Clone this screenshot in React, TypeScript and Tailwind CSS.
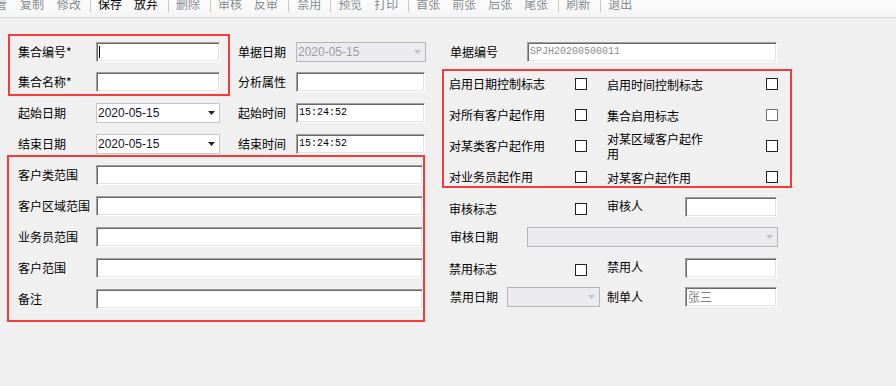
import React from 'react';

// Classic sunken Windows edit box
const sunken =
  'border border-t-[#a0a0a0] border-l-[#a0a0a0] border-b-white border-r-white bg-white shadow-[inset_1px_1px_0_#696969,inset_-1px_-1px_0_#e3e3e3]';

const tools: { t?: string; ml: string; dark?: boolean }[] = [
  { t: '管', ml: '-ml-[5px]' },
  { t: '复制', ml: 'ml-[13px]' },
  { t: '修改', ml: 'ml-[13px]' },
  { ml: 'ml-[9px]' },
  { t: '保存', ml: 'ml-[7px]', dark: true },
  { t: '放弃', ml: 'ml-[12px]', dark: true },
  { ml: 'ml-[10px]' },
  { t: '删除', ml: 'ml-[7px]' },
  { ml: 'ml-[10px]' },
  { t: '审核', ml: 'ml-[7px]' },
  { t: '反审', ml: 'ml-[12px]' },
  { ml: 'ml-[10px]' },
  { t: '禁用', ml: 'ml-[8px]' },
  { ml: 'ml-[9px]' },
  { t: '预览', ml: 'ml-[7px]' },
  { t: '打印', ml: 'ml-[12px]' },
  { ml: 'ml-[10px]' },
  { t: '首张', ml: 'ml-[7px]' },
  { t: '前张', ml: 'ml-[12px]' },
  { t: '后张', ml: 'ml-[12px]' },
  { t: '尾张', ml: 'ml-[12px]' },
  { ml: 'ml-[10px]' },
  { t: '刷新', ml: 'ml-[7px]' },
  { ml: 'ml-[10px]' },
  { t: '退出', ml: 'ml-[7px]' },
];

function TextBox({ className = '', children }: { className?: string; children?: React.ReactNode }) {
  return (
    <div className={`flex h-[20px] shrink-0 items-center pl-[2px] ${sunken} ${className}`}>{children}</div>
  );
}

function Combo({ className = '', value = '', disabled = false }: { className?: string; value?: string; disabled?: boolean }) {
  return (
    <div
      className={`flex h-[20px] shrink-0 items-center justify-between border pl-[1px] pr-[4px] ${
        disabled ? 'border-[#b4b4bc] bg-[#ebebee] text-[#9c9ca6]' : 'border-[#c6c6c6] bg-white text-[#14142a]'
      } ${className}`}
    >
      <span className="font-['Liberation_Sans',sans-serif] text-[12px]">{value}</span>
      <svg width="7" height="4" viewBox="0 0 7 4">
        <path d="M0 0H7L3.5 4Z" fill={disabled ? '#c2c2c8' : '#222'} />
      </svg>
    </div>
  );
}

function Check({ gray = false }: { gray?: boolean }) {
  return <span className={`h-3 w-3 shrink-0 border bg-white ${gray ? 'border-[#707070]' : 'border-[#222]'}`} />;
}

const mono = "font-['Liberation_Mono',monospace] text-[10px]";

export default function App() {
  return (
    <div className="h-[386px] w-[896px] overflow-hidden bg-[#f0f0f0] font-['Noto_Sans_CJK_SC',sans-serif] text-[12px] leading-[14px] text-black">
      {/* toolbar */}
      <div className="flex h-[18px] items-start overflow-hidden whitespace-nowrap border-b border-[#dadada] bg-linear-to-b from-[#fcfcfc] to-[#f4f4f4]">
        {tools.map((it, i) =>
          it.t ? (
            <span key={i} className={`-mt-[3px] shrink-0 ${it.ml} ${it.dark ? 'text-black' : 'text-[#868b92]'}`}>
              {it.t}
            </span>
          ) : (
            <span key={i} className={`h-[12px] w-px shrink-0 bg-[#c8c8c8] ${it.ml}`} />
          )
        )}
      </div>

      <div className="flex">
        {/* left part */}
        <div className="flex w-[430px] shrink-0 flex-col">
          <div className="flex">
            <div className="ml-[8px] mt-[16px] flex flex-col">
              <div className="flex w-[222px] flex-col gap-[10px] border-2 border-[#f53a3a] pb-[2px] pl-[8px] pt-[6px]">
                <div className="flex items-center">
                  <span className="w-[78px] shrink-0">集合编号*</span>
                  <TextBox className="w-[124px]">
                    <span className="h-[12px] w-px bg-black" />
                  </TextBox>
                </div>
                <div className="flex items-center">
                  <span className="w-[78px] shrink-0">集合名称*</span>
                  <TextBox className="w-[124px]" />
                </div>
              </div>
              <div className="ml-[10px] mt-[7px] flex items-center">
                <span className="w-[78px] shrink-0">起始日期</span>
                <Combo className="w-[124px]" value="2020-05-15" />
              </div>
              <div className="ml-[10px] mt-[11px] flex items-center">
                <span className="w-[78px] shrink-0">结束日期</span>
                <Combo className="w-[124px]" value="2020-05-15" />
              </div>
            </div>

            <div className="ml-[8px] mt-[24px] flex flex-col">
              <div className="flex items-center">
                <span className="w-[58px] shrink-0">单据日期</span>
                <Combo className="w-[130px]" value="2020-05-15" disabled />
              </div>
              <div className="mt-[10px] flex items-center">
                <span className="w-[58px] shrink-0">分析属性</span>
                <TextBox className="w-[129px]" />
              </div>
              <div className="mt-[11px] flex items-center">
                <span className="w-[58px] shrink-0">起始时间</span>
                <TextBox className="w-[129px]">
                  <span className={mono}>15:24:52</span>
                </TextBox>
              </div>
              <div className="mt-[11px] flex items-center">
                <span className="w-[58px] shrink-0">结束时间</span>
                <TextBox className="w-[129px]">
                  <span className={mono}>15:24:52</span>
                </TextBox>
              </div>
            </div>
          </div>

          <div className="ml-[7px] mt-[1px] flex w-[418px] flex-col gap-[11px] border-2 border-[#f53a3a] pb-[11px] pl-[9px] pt-[8px]">
            {['客户类范围', '客户区域范围', '业务员范围', '客户范围', '备注'].map((l) => (
              <div key={l} className="flex items-center">
                <span className="w-[78px] shrink-0">{l}</span>
                <TextBox className="w-[327px]" />
              </div>
            ))}
          </div>
        </div>

        {/* right part */}
        <div className="ml-[12px] flex flex-col">
          <div className="ml-[8px] mt-[24px] flex items-center">
            <span className="w-[77px] shrink-0">单据编号</span>
            <TextBox className="w-[250px]">
              <span className={`${mono} text-[#8a8a8a]`}>SPJH20200500011</span>
            </TextBox>
          </div>

          <div className="mt-[7px] flex w-[350px] flex-col gap-[13px] border-2 border-[#f53a3a] pl-[5px] pt-[4px]">
            {[
              ['启用日期控制标志', '启用时间控制标志'],
              ['对所有客户起作用', '集合启用标志'],
              ['对某类客户起作用', '对某区域客户起作用'],
              ['对业务员起作用', '对某客户起作用'],
            ].map(([a, b]) => (
              <div key={a} className="flex h-[18px] items-center">
                <span className="w-[126px] shrink-0">{a}</span>
                <Check />
                <span className="ml-[20px] flex w-[159px] shrink-0">
                  <span className="w-[97px] leading-[15px]">{b}</span>
                </span>
                <Check gray={b === '集合启用标志'} />
              </div>
            ))}
          </div>

          <div className="ml-[7px] mt-[9px] flex items-center">
            <span className="mt-[3px] w-[126px] shrink-0">审核标志</span>
            <span className="mt-[3px] flex">
              <Check />
            </span>
            <span className="ml-[20px] w-[78px] shrink-0 -translate-y-[1px]">审核人</span>
            <TextBox className="w-[92px]" />
          </div>

          <div className="ml-[8px] mt-[10px] flex items-center">
            <span className="w-[77px] shrink-0">审核日期</span>
            <Combo className="w-[251px]" disabled />
          </div>

          <div className="ml-[7px] mt-[11px] flex items-center">
            <span className="mt-[2px] w-[126px] shrink-0">禁用标志</span>
            <span className="mt-[3px] flex">
              <Check />
            </span>
            <span className="ml-[20px] w-[78px] shrink-0 -translate-y-[1px]">禁用人</span>
            <TextBox className="w-[92px]" />
          </div>

          <div className="ml-[8px] mt-[9px] flex items-center">
            <span className="w-[57px] shrink-0">禁用日期</span>
            <Combo className="w-[93px]" disabled />
            <span className="ml-[7px] w-[78px] shrink-0">制单人</span>
            <TextBox className="w-[92px]">
              <span className="text-[#808080]">张三</span>
            </TextBox>
          </div>
        </div>
      </div>
    </div>
  );
}
